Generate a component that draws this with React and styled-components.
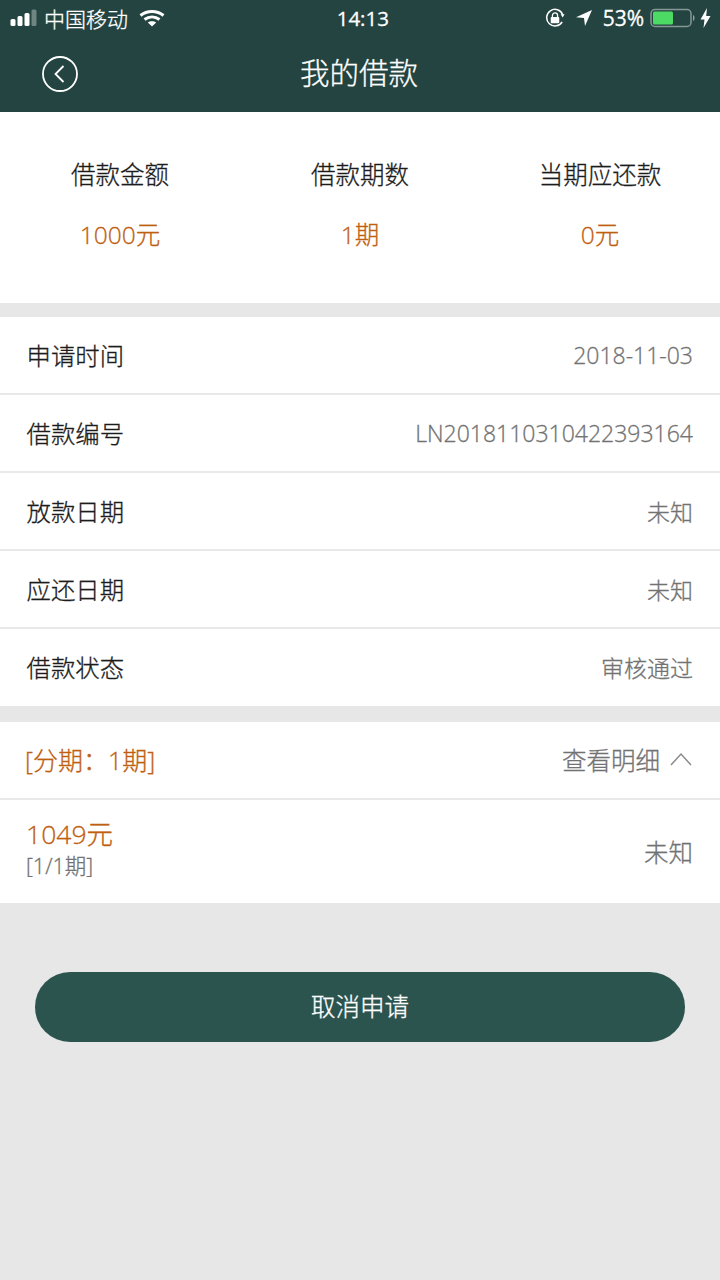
import styled, { createGlobalStyle } from "styled-components"

const GlobalStyle = createGlobalStyle`
  html, body {
    margin: 0;
    padding: 0;
    background: #e6e6e6;
  }
  body {
    font-family: "Open Sans", "Noto Sans CJK SC", sans-serif;
    font-weight: 300;
    -webkit-text-stroke: 0.3px;
  }
`

const Page = styled.div`
  width: 720px;
  height: 1280px;
  background: #e7e7e7;
  overflow: hidden;
`

const Header = styled.header`
  height: 112px;
  background: #234440;
  color: #fff;
  box-sizing: border-box;
`

const StatusBar = styled.div`
  height: 36px;
  display: flex;
  align-items: center;
  justify-content: space-between;
  padding: 0 9px 0 10px;
  font-size: 21px;
`

const StatusGroup = styled.div`
  display: flex;
  align-items: center;
  gap: ${(p) => p.$gap || 6}px;
`

const Carrier = styled.span`
  margin-right: 5px;
`

const StatusTime = styled.div`
  font-size: 20.5px;
  font-weight: 500;
  margin-left: 16px;
`

const Percent = styled.span`
  font-size: 21px;
  font-weight: 400;
  margin-right: -4px;
`

const NavBar = styled.div`
  height: 76px;
  display: flex;
  align-items: center;
  justify-content: center;
  position: relative;
`

const BackButton = styled.div`
  position: absolute;
  left: 42px;
  top: 20px;
  width: 36px;
  height: 36px;
`

const NavTitle = styled.h1`
  margin: 0 2px 2px 0;
  font-size: 29.5px;
  font-weight: 300;
  line-height: 40px;
`

const Summary = styled.section`
  height: 191px;
  background: #fff;
  display: grid;
  grid-template-columns: repeat(3, 1fr);
  box-sizing: border-box;
  padding-top: 45px;
`

const SummaryCell = styled.div`
  display: flex;
  flex-direction: column;
  align-items: center;
  gap: 25px;
`

const SummaryLabel = styled.div`
  font-size: 24.5px;
  line-height: 36px;
  color: #1c1c1c;
`

const SummaryValue = styled.div`
  font-size: 24.5px;
  line-height: 34px;
  color: #bf5f12;
`

const Card = styled.section`
  margin-top: ${(p) => p.$top}px;
  background: #fff;
`

const Row = styled.div`
  height: ${(p) => p.$h || 78}px;
  box-sizing: border-box;
  display: flex;
  align-items: center;
  justify-content: space-between;
  padding: 0 27px;
  border-bottom: 2px solid #e9e9e9;
  &:last-child {
    border-bottom: 0;
    height: ${(p) => (p.$h || 78) - 1}px;
  }
`

const RowLabel = styled.div`
  font-size: 24.4px;
  color: #1c1c1c;
  margin: 0 0 2px -0.5px;
`

const RowValue = styled.div`
  font-size: 23px;
  color: #727272;
  margin-bottom: 1px;
`

const PlanTitle = styled.div`
  font-size: 25px;
  color: #bf5f12;
  margin: 0 0 2px -2px;
`

const DetailToggle = styled.div`
  display: flex;
  align-items: center;
  gap: 9px;
  font-size: 24.5px;
  color: #727272;
  margin-bottom: 2px;
`

const InstallmentInfo = styled.div`
  display: flex;
  flex-direction: column;
  margin: 0 0 5px -1px;
`

const InstallmentAmount = styled.div`
  font-size: 26.5px;
  line-height: 34px;
  color: #bf5f12;
`

const InstallmentCount = styled.div`
  font-size: 21.5px;
  line-height: 30px;
  color: #727272;
`

const InstallmentStatus = styled.div`
  font-size: 24.5px;
  color: #727272;
  margin-bottom: 1px;
`

const ButtonWrap = styled.div`
  padding: 69px 35px 0;
`

const CancelButton = styled.button`
  display: block;
  width: 100%;
  height: 70px;
  border: 0;
  border-radius: 35px;
  background: #2c544f;
  color: #fff;
  font-family: inherit;
  font-weight: 300;
  font-size: 24.5px;
  padding: 0 0 4px;
`

const Signal = () => (
  <svg width="28" height="18" viewBox="0 0 28 18">
    <rect x="0.5" y="10" width="5" height="7" rx="1.5" fill="#fff" />
    <rect x="7.5" y="7" width="5" height="10" rx="1.5" fill="#fff" />
    <rect x="14.5" y="4" width="5" height="13" rx="1.5" fill="#fff" />
    <rect x="21.5" y="0.5" width="5" height="16.5" rx="1.5" fill="#fff" opacity="0.35" />
  </svg>
)

const Wifi = () => (
  <svg width="26" height="18" viewBox="0 0 26 18" fill="none" stroke="#fff" strokeWidth="3">
    <path d="M1.5 6.5 C8 1 18 1 24.5 6.5" />
    <path d="M5.5 10.5 C10 7 16 7 20.5 10.5" />
    <path d="M13 17.5 L8.8 13.6 C11 11.8 15 11.8 17.2 13.6 Z" fill="#fff" stroke="none" />
  </svg>
)

const RotationLock = () => (
  <svg width="20" height="20" viewBox="0 0 21 21" fill="none">
    <path d="M18 14.5 A8.7 8.7 0 1 1 18.6 7" stroke="#fff" strokeWidth="1.6" />
    <path d="M20.6 6.5 L16.4 6.5 L18.6 10 Z" fill="#fff" />
    <rect x="6" y="9.5" width="9" height="6.5" rx="1" fill="#fff" />
    <path d="M7.8 9.5 V7.8 a2.7 2.7 0 0 1 5.4 0 V9.5" stroke="#fff" strokeWidth="1.4" />
  </svg>
)

const LocationArrow = () => (
  <svg width="18" height="18" viewBox="0 0 18 18">
    <path d="M17 1 L1 8.2 L9 9 L10 17 Z" fill="#fff" />
  </svg>
)

const Battery = () => (
  <svg width="46" height="20" viewBox="0 0 46 20">
    <rect x="1" y="1.5" width="40" height="17" rx="4" fill="none" stroke="#fff" strokeOpacity="0.45" strokeWidth="1.5" />
    <rect x="3" y="3.5" width="20" height="13" rx="1.5" fill="#4cd964" />
    <path d="M43 7 C45 7.5 45 12.5 43 13 Z" fill="#fff" fillOpacity="0.5" />
  </svg>
)

const Bolt = () => (
  <svg width="11" height="20" viewBox="0 0 11 20">
    <path d="M7 0 L0.5 11.5 H4.5 L3.5 20 L10.5 8 H6.2 Z" fill="#fff" />
  </svg>
)

const BackIcon = () => (
  <svg width="36" height="36" viewBox="0 0 36 36" fill="none" stroke="#fff" strokeWidth="1.8">
    <circle cx="18" cy="18" r="17" />
    <path d="M21.5 10 L13.5 18 L21.5 26" />
  </svg>
)

const ChevronUp = () => (
  <svg width="24" height="14" viewBox="0 0 24 14" fill="none" stroke="#8a8a8a" strokeWidth="1.5">
    <path d="M2 13 L12 2 L22 13" />
  </svg>
)

const summary = [
  { label: "借款金额", value: "1000元" },
  { label: "借款期数", value: "1期" },
  { label: "当期应还款", value: "0元" },
]

const details = [
  { label: "申请时间", value: "2018-11-03" },
  { label: "借款编号", value: "LN2018110310422393164" },
  { label: "放款日期", value: "未知" },
  { label: "应还日期", value: "未知" },
  { label: "借款状态", value: "审核通过" },
]

function App() {
  return (
    <Page>
      <GlobalStyle />
      <Header>
        <StatusBar>
          <StatusGroup>
            <Signal />
            <Carrier>中国移动</Carrier>
            <Wifi />
          </StatusGroup>
          <StatusTime>14:13</StatusTime>
          <StatusGroup $gap={10}>
            <RotationLock />
            <LocationArrow />
            <Percent>53%</Percent>
            <StatusGroup $gap={4}>
              <Battery />
              <Bolt />
            </StatusGroup>
          </StatusGroup>
        </StatusBar>
        <NavBar>
          <BackButton>
            <BackIcon />
          </BackButton>
          <NavTitle>我的借款</NavTitle>
        </NavBar>
      </Header>

      <Summary>
        {summary.map((item) => (
          <SummaryCell key={item.label}>
            <SummaryLabel>{item.label}</SummaryLabel>
            <SummaryValue>{item.value}</SummaryValue>
          </SummaryCell>
        ))}
      </Summary>

      <Card $top={14}>
        {details.map((item) => (
          <Row key={item.label}>
            <RowLabel>{item.label}</RowLabel>
            <RowValue>{item.value}</RowValue>
          </Row>
        ))}
      </Card>

      <Card $top={16}>
        <Row>
          <PlanTitle>[分期：1期]</PlanTitle>
          <DetailToggle>
            查看明细
            <ChevronUp />
          </DetailToggle>
        </Row>
        <Row $h={104}>
          <InstallmentInfo>
            <InstallmentAmount>1049元</InstallmentAmount>
            <InstallmentCount>[1/1期]</InstallmentCount>
          </InstallmentInfo>
          <InstallmentStatus>未知</InstallmentStatus>
        </Row>
      </Card>

      <ButtonWrap>
        <CancelButton>取消申请</CancelButton>
      </ButtonWrap>
    </Page>
  )
}

export default App
